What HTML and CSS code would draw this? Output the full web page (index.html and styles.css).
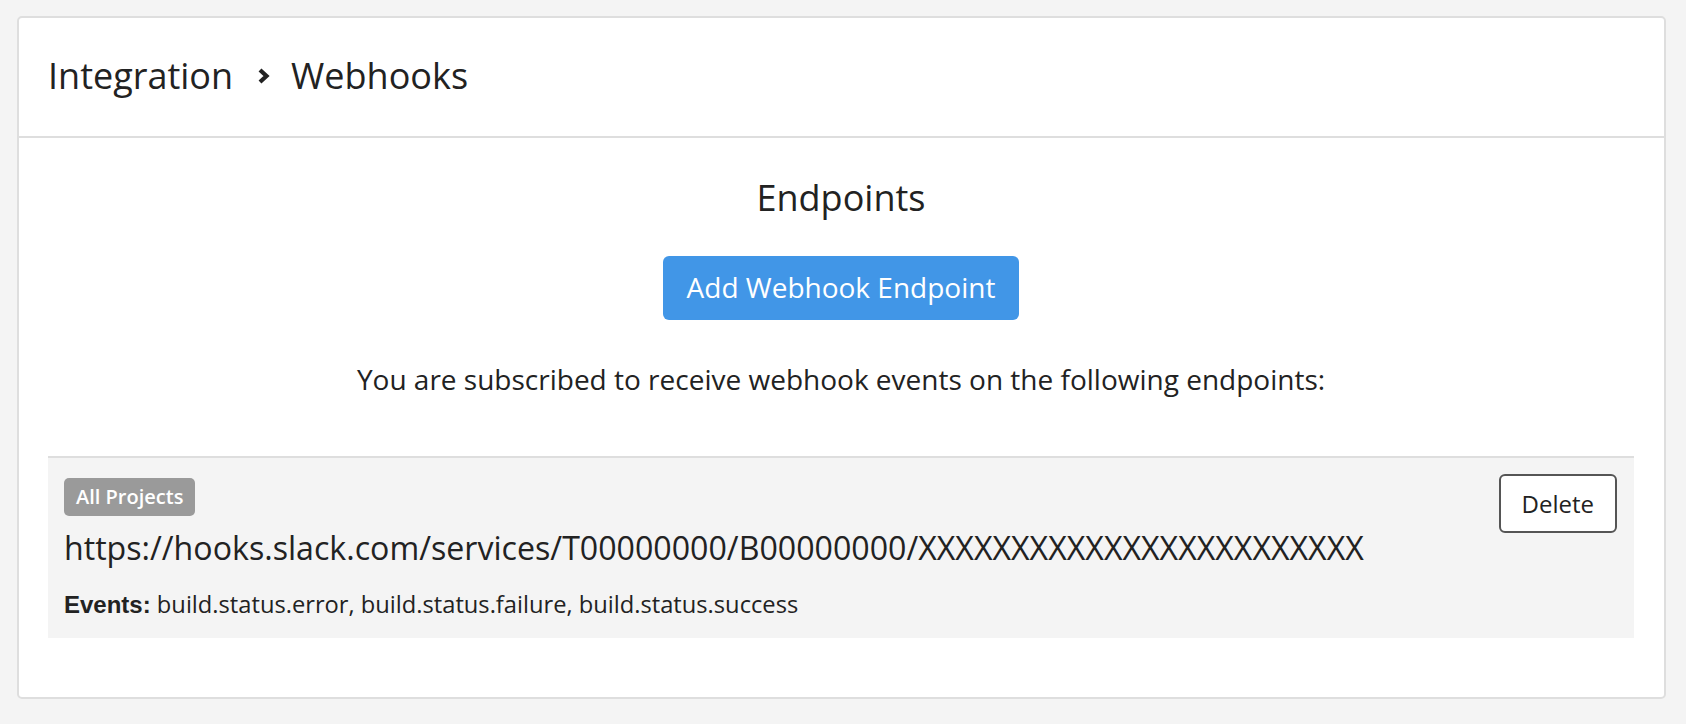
FILE: index.html
```html
<!DOCTYPE html>
<html lang="en">
<head>
<meta charset="utf-8">
<title>Integration › Webhooks</title>
<link rel="stylesheet" href="styles.css">
</head>
<body>
<div class="card">
  <div class="card-header">
    <span class="crumb">Integration</span>
    <svg class="chevron" width="14" height="18" viewBox="0 0 14 18" aria-hidden="true"><polyline points="3,3 9.5,9 3,15" fill="none" stroke="#222" stroke-width="4.2" stroke-linecap="butt" stroke-linejoin="miter"/></svg>
    <span class="crumb">Webhooks</span>
  </div>
  <div class="card-body">
    <h2 class="section-title">Endpoints</h2>
    <div class="actions"><button class="btn-primary">Add Webhook Endpoint</button></div>
    <p class="intro">You are subscribed to receive webhook events on the following endpoints:</p>
    <div class="endpoint">
      <div class="endpoint-main">
        <div><span class="badge">All Projects</span></div>
        <div class="endpoint-url">https://hooks.slack.com/services/T00000000/B00000000/XXXXXXXXXXXXXXXXXXXXXXXX</div>
        <div class="endpoint-events"><strong class="label">Events:</strong> build.status.error, build.status.failure, build.status.success</div>
      </div>
      <button class="btn-delete">Delete</button>
    </div>
  </div>
</div>
</body>
</html>
```

FILE: styles.css
```css
html, body {
  margin: 0;
  padding: 0;
}
body {
  background: #f4f4f4;
  font-family: "Open Sans", "Liberation Sans", sans-serif;
  color: #222;
  padding: 16px 20px 0 17px;
}
.card {
  background: #fff;
  border: 2px solid #dedede;
  border-radius: 5px;
}
.card-header {
  display: flex;
  align-items: center;
  padding: 36px 28px 39px 29px;
  border-bottom: 2px solid #dedede;
  font-size: 36px;
  line-height: 43px;
}
.chevron {
  margin: 0 20px 0 24px;
  flex: none;
}
.card-body {
  padding: 38px 30px 59px 29px;
  text-align: center;
}
.section-title {
  margin: 0;
  font-size: 36px;
  font-weight: 400;
  line-height: 43px;
}
.actions {
  margin-top: 37px;
}
.btn-primary {
  font-family: "Open Sans", "Liberation Sans", sans-serif;
  font-size: 28px;
  line-height: 39px;
  color: #fff;
  background: #4196e7;
  border: 0;
  border-radius: 6px;
  padding: 12px 24px 13px;
}
.intro {
  margin: 42px 0 0;
  font-size: 28px;
  line-height: 34px;
}
.endpoint {
  margin-top: 60px;
  border-top: 2px solid #dedede;
  background: #f4f4f4;
  display: flex;
  align-items: flex-start;
  padding: 16px 17px 19px 16px;
  text-align: left;
}
.endpoint-main {
  flex: 1;
  padding-top: 4px;
}
.badge {
  display: inline-block;
  background: #9a9a9a;
  color: #fff;
  font-size: 20px;
  font-weight: 600;
  line-height: 24px;
  padding: 7px 12px;
  border-radius: 5px;
}
.endpoint-url {
  margin-top: 13px;
  font-size: 32.15px;
  line-height: 38px;
}
.endpoint-events {
  margin-top: 23px;
  font-size: 23.7px;
  line-height: 28px;
}
.label {
  font-family: "Liberation Sans", Arial, sans-serif;
  font-size: 24px;
  font-weight: 700;
}
.btn-delete {
  flex: none;
  font-family: "Open Sans", "Liberation Sans", sans-serif;
  font-size: 24px;
  line-height: 33px;
  color: #222;
  background: #fff;
  border: 2px solid #555;
  border-radius: 6px;
  padding: 11px 21px;
}
```
